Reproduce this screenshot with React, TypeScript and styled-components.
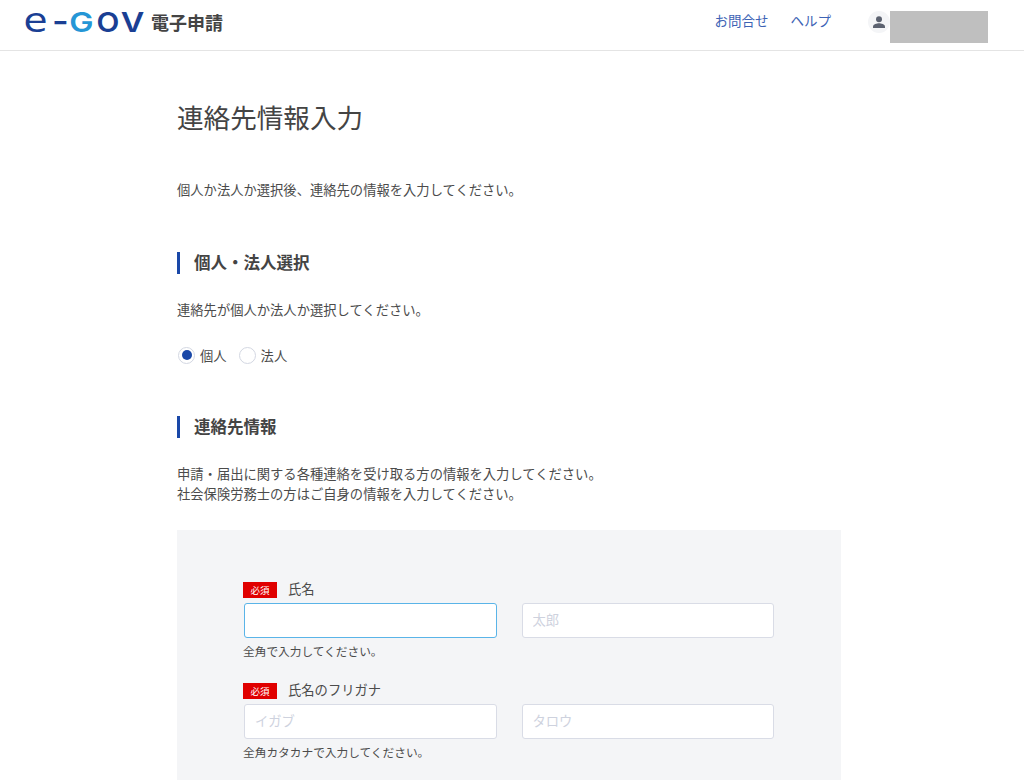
import React from "react";
import styled, { createGlobalStyle } from "styled-components";

const GlobalStyle = createGlobalStyle`
  html, body {
    margin: 0;
    padding: 0;
    background: #fff;
    color: #4b4b4b;
    font-family: "Noto Sans CJK JP", "Noto Sans", sans-serif;
    font-size: 13.3px;
  }
  * { box-sizing: border-box; }
`;

const Page = styled.div`
  height: 780px;
  overflow: hidden;
`;

const Header = styled.header`
  height: 51px;
  border-bottom: 1px solid #e4e4e4;
  display: flex;
  align-items: flex-start;
  padding: 0 36px 0 22px;
`;

const Brand = styled.div`
  display: flex;
  align-items: center;
  height: 43px;
`;

const LogoLetters = styled.div`
  display: flex;
  align-items: baseline;
  width: 129px;
  margin-bottom: 4px;
  font-family: Inter, "Liberation Sans", sans-serif;
  line-height: 1;
`;

const LogoLetter = styled.span<{ $light?: boolean; $size: number; $width: number; $gap: number; $stretch: number }>`
  display: inline-block;
  width: ${({ $width }) => $width}px;
  margin-right: ${({ $gap }) => $gap}px;
  font-size: ${({ $size }) => $size}px;
  font-weight: 600;
  text-align: center;
  color: ${({ $light }) => ($light ? "#2596d6" : "#1a3f94")};
  transform: scaleX(${({ $stretch }) => $stretch});
`;

const LogoSmallE = styled(LogoLetter)`
  font-family: "DejaVu Sans", sans-serif;
  font-weight: 400;
`;

const ServiceName = styled.span`
  font-size: 18px;
  font-weight: 700;
  color: #444;
`;

const Nav = styled.nav`
  margin-left: auto;
  display: flex;
  align-items: center;
  height: 40px;
  gap: 22px;
`;

const NavLink = styled.a`
  color: #3d63b5;
  font-size: 13.5px;
`;

const UserBox = styled.div`
  display: flex;
  margin-left: 15px;
  align-self: flex-start;
  margin-top: 11px;
`;

const Avatar = styled.div`
  width: 22px;
  height: 22px;
  border-radius: 50%;
  background: #f4f5f7;
  display: flex;
  align-items: center;
  justify-content: center;
`;

const MaskedName = styled.div`
  width: 98px;
  height: 32px;
  background: #bfbfbf;
`;

const Main = styled.main`
  width: 664px;
  margin-left: 177px;
`;

const Title = styled.h1`
  margin: 44px 0 0;
  font-size: 26.6px;
  font-weight: 400;
  line-height: 44px;
  color: #444;
`;

const Paragraph = styled.p<{ $top: number }>`
  margin: ${({ $top }) => $top}px 0 0;
  line-height: 20px;
`;

const SectionTitle = styled.h2<{ $top: number }>`
  margin: ${({ $top }) => $top}px 0 0;
  height: 22px;
  border-left: 3px solid #1a48a8;
  padding-left: 14px;
  font-size: 16.5px;
  font-weight: 700;
  line-height: 20px;
  color: #444;
`;

const RadioRow = styled.div`
  display: flex;
  align-items: center;
  margin-top: 25px;
  height: 20px;
`;

const RadioCircle = styled.span<{ $checked?: boolean }>`
  width: 17px;
  height: 17px;
  margin-left: 1px;
  border-radius: 50%;
  border: 1px solid #d3d7e2;
  background: #fff;
  display: flex;
  align-items: center;
  justify-content: center;
  &::after {
    content: "";
    width: 10px;
    height: 10px;
    border-radius: 50%;
    background: ${({ $checked }) => ($checked ? "#1a48a8" : "transparent")};
  }
`;

const RadioLabel = styled.span`
  margin: 0 11px 0 5px;
`;

const Panel = styled.section`
  margin-top: 26px;
  height: 300px;
  background: #f4f5f7;
  padding: 50px 67px 0;
`;

const Field = styled.div`
  margin-bottom: 21px;
`;

const LabelRow = styled.div`
  display: flex;
  align-items: center;
  height: 20px;
  margin-left: -1px;
`;

const RequiredBadge = styled.span`
  width: 34px;
  height: 16px;
  background: #e00000;
  color: #fff;
  font-size: 9.5px;
  line-height: 16px;
  text-align: center;
  margin-right: 11px;
`;

const LabelText = styled.span`
  padding-bottom: 3px;
`;

const InputRow = styled.div`
  display: flex;
  gap: 25px;
  margin-top: 3px;
`;

const TextInput = styled.input<{ $focused?: boolean }>`
  width: 253px;
  height: 35px;
  margin: 0;
  padding: 0 10px 2px;
  border: 1px solid ${({ $focused }) => ($focused ? "#5ab4e8" : "#d9dce6")};
  border-radius: 3px;
  background: #fff;
  font-family: inherit;
  font-size: 13.3px;
  outline: none;
  &::placeholder {
    color: #ced2de;
  }
`;

const Hint = styled.div`
  margin: 4px 0 0 -1px;
  font-size: 11.7px;
  line-height: 18px;
`;

const PersonIcon = () => (
  <svg width="16" height="16" viewBox="0 0 24 24" fill="#5c6270" aria-hidden="true">
    <circle cx="12" cy="8" r="4.5" />
    <path d="M3 21v-2.2C3 15.4 9 14 12 14s9 1.4 9 4.8V21z" />
  </svg>
);

const App: React.FC = () => (
  <Page>
    <GlobalStyle />
    <Header>
      <Brand>
        <LogoLetters>
          <LogoSmallE $size={34} $width={27} $gap={4} $stretch={1.15}>e</LogoSmallE>
          <LogoLetter $size={30} $width={10} $gap={7} $stretch={1.2}>-</LogoLetter>
          <LogoLetter $light $size={27} $width={23} $gap={4} $stretch={1.2}>G</LogoLetter>
          <LogoLetter $size={27} $width={22} $gap={3} $stretch={1.1}>O</LogoLetter>
          <LogoLetter $size={27} $width={21} $gap={0} $stretch={1.2}>V</LogoLetter>
        </LogoLetters>
        <ServiceName>電子申請</ServiceName>
      </Brand>
      <Nav>
        <NavLink>お問合せ</NavLink>
        <NavLink>ヘルプ</NavLink>
        <UserBox>
          <Avatar>
            <PersonIcon />
          </Avatar>
          <MaskedName />
        </UserBox>
      </Nav>
    </Header>
    <Main>
      <Title>連絡先情報入力</Title>
      <Paragraph $top={41}>個人か法人か選択後、連絡先の情報を入力してください。</Paragraph>
      <SectionTitle $top={52}>個人・法人選択</SectionTitle>
      <Paragraph $top={26}>連絡先が個人か法人か選択してください。</Paragraph>
      <RadioRow>
        <RadioCircle $checked />
        <RadioLabel>個人</RadioLabel>
        <RadioCircle />
        <RadioLabel>法人</RadioLabel>
      </RadioRow>
      <SectionTitle $top={51}>連絡先情報</SectionTitle>
      <Paragraph $top={26}>
        申請・届出に関する各種連絡を受け取る方の情報を入力してください。
        <br />
        社会保険労務士の方はご自身の情報を入力してください。
      </Paragraph>
      <Panel>
        <Field>
          <LabelRow>
            <RequiredBadge>必須</RequiredBadge>
            <LabelText>氏名</LabelText>
          </LabelRow>
          <InputRow>
            <TextInput $focused />
            <TextInput placeholder="太郎" />
          </InputRow>
          <Hint>全角で入力してください。</Hint>
        </Field>
        <Field>
          <LabelRow>
            <RequiredBadge>必須</RequiredBadge>
            <LabelText>氏名のフリガナ</LabelText>
          </LabelRow>
          <InputRow>
            <TextInput placeholder="イガブ" />
            <TextInput placeholder="タロウ" />
          </InputRow>
          <Hint>全角カタカナで入力してください。</Hint>
        </Field>
      </Panel>
    </Main>
  </Page>
);

export default App;
